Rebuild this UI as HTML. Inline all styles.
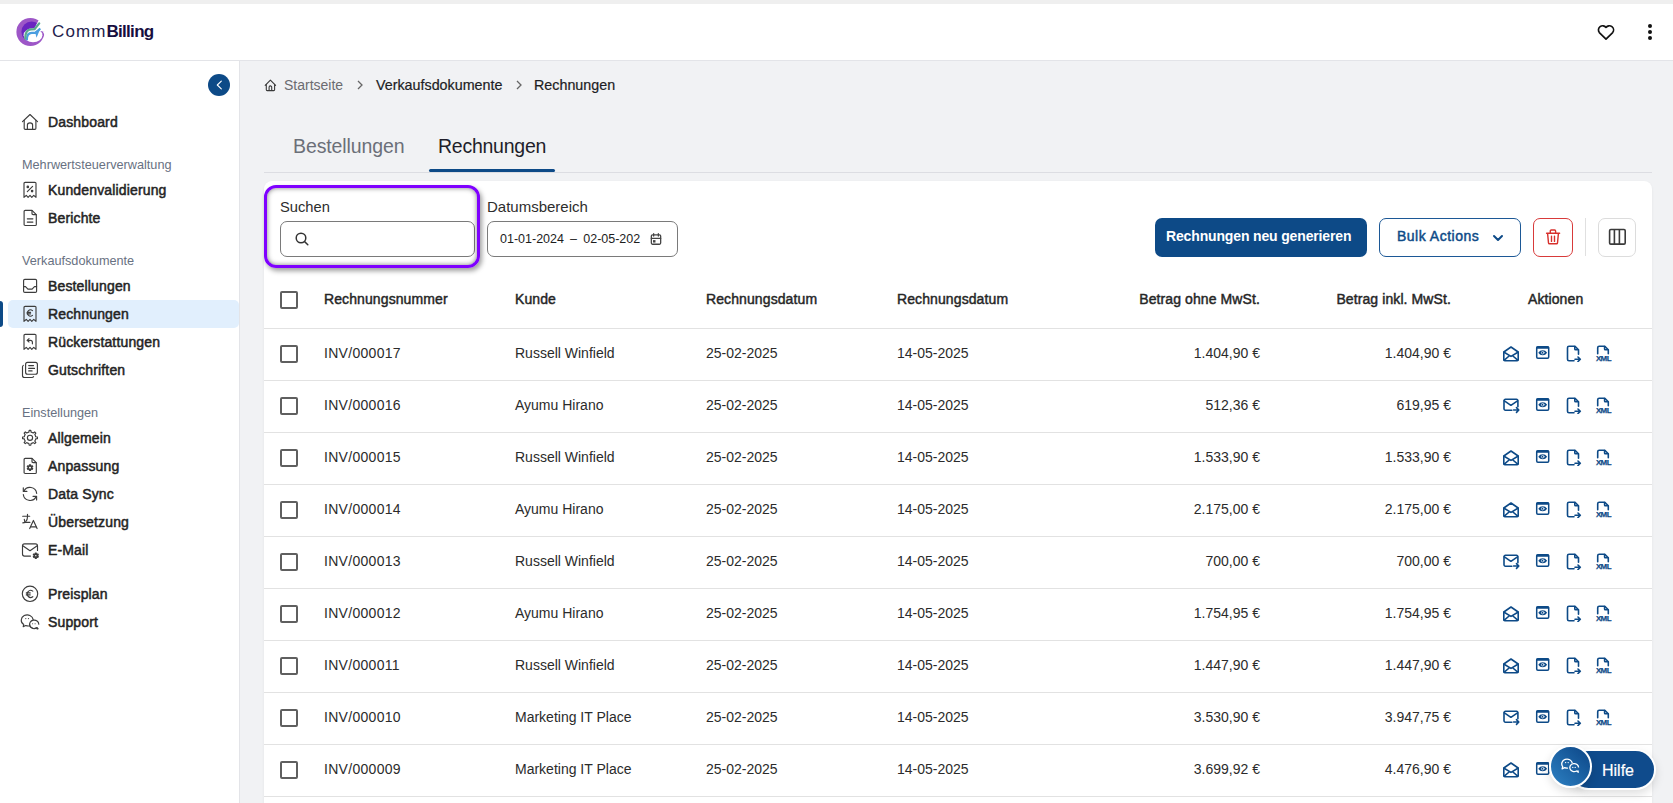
<!DOCTYPE html>
<html><head><meta charset="utf-8">
<style>
*{box-sizing:border-box;margin:0;padding:0}
html,body{width:1673px;height:803px;overflow:hidden;background:#f1f2f4;font-family:"Liberation Sans",sans-serif;color:#222}
.abs{position:absolute}
#topstrip{left:0;top:0;width:1673px;height:4px;background:#efefef}
#header{left:0;top:4px;width:1673px;height:57px;background:#fff;border-bottom:1px solid #e3e4e8}
#sidebar{left:0;top:61px;width:240px;height:742px;background:#fff;border-right:1px solid #e3e4e8}
.nav{position:absolute;left:8px;width:231px;height:28px;border-radius:5px}
.nav svg{position:absolute;left:10px;top:2px}
.nav span{position:absolute;left:40px;top:0;line-height:28px;font-size:14px;color:#242424;-webkit-text-stroke:0.5px #242424;letter-spacing:0.15px;white-space:nowrap}
.nav.active{background:#e1effd}
.sec{position:absolute;left:22px;font-size:12.7px;color:#687182;line-height:16px;white-space:nowrap}
.ico{fill:none;stroke:#3d3d3d;stroke-width:1.15;stroke-linecap:round;stroke-linejoin:round}
#card{left:264px;top:181px;width:1388px;height:640px;background:#fff;border-radius:8px;box-shadow:0 1px 3px rgba(0,0,0,.06)}
.row{position:absolute;left:264px;width:1388px;height:52px;border-top:1px solid #e2e2e2}
.cb{position:absolute;left:280px;width:18px;height:18px;border:2px solid #5f5f5f;border-radius:2px}
.td{position:absolute;font-size:14px;line-height:20px;color:#2b2b2b;white-space:nowrap}
.td.r{text-align:right}
.th{position:absolute;font-size:14px;line-height:20px;color:#262626;-webkit-text-stroke:0.45px #262626;white-space:nowrap;letter-spacing:0.1px}
.aic{position:absolute;fill:none;stroke:#0d4a87;stroke-width:1.6;stroke-linecap:round;stroke-linejoin:round}
</style></head>
<body>
<div id="topstrip" class="abs"></div>
<div id="header" class="abs">
  <svg class="abs" style="left:14px;top:12px" width="34" height="32" viewBox="0 0 34 32">
    <circle cx="16.4" cy="16" r="14" fill="#9d56c7"/>
    <circle cx="17.6" cy="15.8" r="10.2" fill="#6a24c0"/>
    <ellipse cx="19" cy="19.3" rx="9.4" ry="7" fill="#fff"/>
    <path d="M19 15L24.6 4.2 34 0V15.5L30.5 15.5z" fill="#fff"/>
    <path d="M28.6 15.2 L31 15.2 L31 20 Z" fill="#fff"/>
    <path d="M22.5 21.8L26.5 12.2 21 15.5z" fill="#4d9fe0"/>
    <path d="M12.8 24.2C12.8 19 15 16.9 17.8 16.9L21.6 16.9 26.2 12.6" fill="none" stroke="#4a9ee0" stroke-width="2.2"/>
    <path d="M11.2 22.6C11.2 16.5 13.8 13.4 17 13.3L20.6 13.2 25.2 7.4" fill="none" stroke="#5da98e" stroke-width="2.3" stroke-linecap="round"/>
  </svg>
  <div class="abs" style="left:52px;top:13px;font-size:17px;line-height:30px;color:#231c4c;white-space:nowrap;letter-spacing:1.1px">Comm<b style="color:#170f3f;letter-spacing:-0.7px">Billing</b></div>
  <svg class="abs" style="left:1596px;top:18px" width="20" height="20" viewBox="0 0 24 24" fill="none" stroke="#111" stroke-width="2" stroke-linejoin="round"><path d="M12 20.5l-8-7.8A4.6 4.6 0 0 1 12 6.5a4.6 4.6 0 0 1 8 6.2z"/></svg>
  <div class="abs" style="left:1648px;top:20px;width:4px;height:4px;border-radius:2px;background:#111"></div>
  <div class="abs" style="left:1648px;top:26px;width:4px;height:4px;border-radius:2px;background:#111"></div>
  <div class="abs" style="left:1648px;top:32px;width:4px;height:4px;border-radius:2px;background:#111"></div>
</div>
<div id="sidebar" class="abs">
</div>
<div class="nav" style="top:108px"><svg viewBox="0 0 24 24" width="24" height="24" class="ico" ><path d="M4.5 11.7L12 4.5l7.5 7.2"/><path d="M6.2 10.2v8.1a1.1 1.1 0 0 0 1.1 1.1h9.5a1.1 1.1 0 0 0 1.1-1.1v-8.1"/><path d="M9.4 19.4v-4.3a2.6 2.2 0 0 1 5.2 0v4.3"/></svg><span>Dashboard</span></div><div class="sec" style="top:157px">Mehrwertsteuerverwaltung</div><div class="nav" style="top:176px"><svg viewBox="0 0 24 24" width="24" height="24" class="ico" ><path d="M6 19.3V5.4a1.1 1.1 0 0 1 1.1-1.1h9.8A1.1 1.1 0 0 1 18 5.4v13.9L15.7 17.4 13.8 19.3 12 17.4 10.1 19.3 8.3 17.4z"/><path d="M9.3 13.7l5.3-5.4"/><circle cx="9.8" cy="8.9" r=".75" fill="#3d3d3d"/><circle cx="14.1" cy="13.1" r=".75" fill="#3d3d3d"/></svg><span>Kundenvalidierung</span></div><div class="nav" style="top:204px"><svg viewBox="0 0 24 24" width="24" height="24" class="ico" ><path d="M7.2 4.3H14l4.3 4.3v9.8a1.1 1.1 0 0 1-1.1 1.1H7.2a1.1 1.1 0 0 1-1.1-1.1V5.4a1.1 1.1 0 0 1 1.1-1.1z"/><path d="M14 4.5v3a1.1 1.1 0 0 0 1.1 1.1h3"/><path d="M9.3 12.8h5.6M9.3 16.1h5.6"/></svg><span>Berichte</span></div><div class="sec" style="top:253px">Verkaufsdokumente</div><div class="nav" style="top:272px"><svg viewBox="0 0 24 24" width="24" height="24" class="ico" ><rect x="5.6" y="5.4" width="13" height="13" rx="1.2"/><path d="M5.6 12.6h1.9l2.4 2.5h4.2l2.4-2.5h2.1"/></svg><span>Bestellungen</span></div><div class="nav active" style="top:300px"><svg viewBox="0 0 24 24" width="24" height="24" class="ico" ><path d="M6 19.3V5.4a1.1 1.1 0 0 1 1.1-1.1h9.8A1.1 1.1 0 0 1 18 5.4v13.9L15.7 17.4 13.8 19.3 12 17.4 10.1 19.3 8.3 17.4z"/><path d="M14.5 8.6a3.1 3.1 0 1 0 0 4.8"/><path d="M9.2 10.3h3.4M9.2 11.8h3.4"/></svg><span>Rechnungen</span></div><div class="nav" style="top:328px"><svg viewBox="0 0 24 24" width="24" height="24" class="ico" ><path d="M6 19.3V5.4a1.1 1.1 0 0 1 1.1-1.1h9.8A1.1 1.1 0 0 1 18 5.4v13.9L15.7 17.4 13.8 19.3 12 17.4 10.1 19.3 8.3 17.4z"/><path d="M14.4 13.8v-1.5a2 2 0 0 0-2-2H9.3"/><path d="M11 8.6l-1.8 1.7 1.8 1.7"/></svg><span>Rückerstattungen</span></div><div class="nav" style="top:356px"><svg viewBox="0 0 24 24" width="24" height="24" class="ico" ><rect x="7.6" y="4.4" width="11.8" height="11.8" rx="2"/><path d="M5.3 7.4a2 2 0 0 0-.8 1.6v8.5a2 2 0 0 0 2 2h7.5a2 2 0 0 0 1.6-.8"/><path d="M10.7 7.6h4.8M10.7 10.4h5.8M10.7 12.9h3.4"/></svg><span>Gutschriften</span></div><div class="sec" style="top:405px">Einstellungen</div><div class="nav" style="top:424px"><svg viewBox="0 0 24 24" width="24" height="24" class="ico" ><path d="M9.78 6.44 L10.91 6.10 L11.18 4.35 L12.82 4.35 L13.09 6.10 L14.22 6.44 L15.26 7.00 L16.69 5.95 L17.85 7.11 L16.80 8.54 L17.36 9.58 L17.70 10.71 L19.45 10.98 L19.45 12.62 L17.70 12.89 L17.36 14.02 L16.80 15.06 L17.85 16.49 L16.69 17.65 L15.26 16.60 L14.22 17.16 L13.09 17.50 L12.82 19.25 L11.18 19.25 L10.91 17.50 L9.78 17.16 L8.74 16.60 L7.31 17.65 L6.15 16.49 L7.20 15.06 L6.64 14.02 L6.30 12.89 L4.55 12.62 L4.55 10.98 L6.30 10.71 L6.64 9.58 L7.20 8.54 L6.15 7.11 L7.31 5.95 L8.74 7.00Z"/><circle cx="12" cy="11.8" r="2.6"/></svg><span>Allgemein</span></div><div class="nav" style="top:452px"><svg viewBox="0 0 24 24" width="24" height="24" class="ico" ><path d="M7.2 4.3H14l4.3 4.3v9.8a1.1 1.1 0 0 1-1.1 1.1H7.2a1.1 1.1 0 0 1-1.1-1.1V5.4a1.1 1.1 0 0 1 1.1-1.1z"/><path d="M14 4.5v3a1.1 1.1 0 0 0 1.1 1.1h3"/><path d="M11.20 12.21 L11.53 12.07 L11.46 10.85 L12.54 10.85 L12.47 12.07 L12.80 12.21 L13.09 12.43 L14.11 11.76 L14.65 12.69 L13.56 13.24 L13.60 13.60 L13.56 13.96 L14.65 14.51 L14.11 15.44 L13.09 14.77 L12.80 14.99 L12.47 15.13 L12.54 16.35 L11.46 16.35 L11.53 15.13 L11.20 14.99 L10.91 14.77 L9.89 15.44 L9.35 14.51 L10.44 13.96 L10.40 13.60 L10.44 13.24 L9.35 12.69 L9.89 11.76 L10.91 12.43Z" style="stroke-width:1.3"/></svg><span>Anpassung</span></div><div class="nav" style="top:480px"><svg viewBox="0 0 24 24" width="24" height="24" class="ico" ><path d="M18.7 11.3A6.8 6.8 0 0 0 5.9 9.2"/><path d="M5.3 5.8v3.6h3.6"/><path d="M5.3 12.5A6.8 6.8 0 0 0 18 14.9"/><path d="M15 14.3h3.6v3.6"/></svg><span>Data Sync</span></div><div class="nav" style="top:508px"><svg viewBox="0 0 24 24" width="24" height="24" class="ico" ><path d="M4.7 6.2h7"/><path d="M9.5 4.2v2.5c0 2.4-.7 3.9-1.8 4.9"/><path d="M6.3 9.3l.5 2.6"/><path d="M4.8 12.9l2.6-.5h4.5"/><path d="M11.7 18.6l3.7-8.2 3.7 8.2"/><path d="M12.9 16.9h5"/></svg><span>Übersetzung</span></div><div class="nav" style="top:536px"><svg viewBox="0 0 24 24" width="24" height="24" class="ico" ><path d="M12.5 18.1H6.5a2 2 0 0 1-2-2V7.8a2 2 0 0 1 2-2h11a2 2 0 0 1 2 2v4.6"/><path d="M4.8 7.7l7.2 5 7.2-5"/><path d="M17.15 16.57 L17.42 16.46 L17.30 15.15 L18.30 15.15 L18.18 16.46 L18.45 16.57 L18.68 16.75 L19.76 15.99 L20.26 16.86 L19.07 17.41 L19.10 17.70 L19.07 17.99 L20.26 18.54 L19.76 19.41 L18.68 18.65 L18.45 18.83 L18.18 18.94 L18.30 20.25 L17.30 20.25 L17.42 18.94 L17.15 18.83 L16.92 18.65 L15.84 19.41 L15.34 18.54 L16.53 17.99 L16.50 17.70 L16.53 17.41 L15.34 16.86 L15.84 15.99 L16.92 16.75Z" style="stroke-width:1.3"/></svg><span>E-Mail</span></div><div class="nav" style="top:580px"><svg viewBox="0 0 24 24" width="24" height="24" class="ico" ><circle cx="12" cy="11.8" r="7.7"/><path d="M14.8 9.1A3.5 3.5 0 1 0 14.8 14.7"/><path d="M8.3 10.9h3.9M8.3 12.9h3.9"/></svg><span>Preisplan</span></div><div class="nav" style="top:608px"><svg viewBox="0 0 24 24" width="24" height="24" class="ico" ><path d="M15.2 9.6A6 5.4 0 1 0 5.7 14.6l-.5 2 2.5-1.1a6.3 5.5 0 0 0 3.5.5"/><path d="M20.8 14.2a4.6 4.2 0 1 0-2.1 3.6l.5 1.3-.1-1.5"/><path d="M11.5 14.2a4.6 4.2 0 0 0 7.2 3.6l1.4.9"/><circle cx="7.8" cy="8.6" r=".6" fill="#3d3d3d" stroke="none"/><circle cx="10.5" cy="8.6" r=".6" fill="#3d3d3d" stroke="none"/><circle cx="14.6" cy="13.7" r=".55" fill="#3d3d3d" stroke="none"/><circle cx="17.1" cy="13.7" r=".55" fill="#3d3d3d" stroke="none"/></svg><span>Support</span></div><div class="abs" style="left:0;top:301px;width:3px;height:26px;background:#0d4a87;border-radius:0 3px 3px 0"></div>
<div class="abs" style="left:208px;top:74px;width:22px;height:22px;border-radius:11px;background:#0d4a87"></div>
<svg class="abs" style="left:208px;top:74px" width="22" height="22" viewBox="0 0 22 22" fill="none" stroke="#fff" stroke-width="1.15" stroke-linecap="round" stroke-linejoin="round"><path d="M13.3 7.2L9.3 11l4 3.8"/></svg>

<!-- breadcrumb -->
<svg class="abs" style="left:260px;top:75px" width="20" height="20" viewBox="0 0 20 20" fill="none" stroke="#3a3a3a" stroke-width="1.1" stroke-linecap="round" stroke-linejoin="round"><path d="M5.2 10.3L10.4 5.1l5.2 5.2"/><path d="M6.3 9.3v5.5a.8.8 0 0 0 .8.8h6.7a.8.8 0 0 0 .8-.8V9.3"/><path d="M9.1 15.5v-3.3a1.3 1.3 0 0 1 2.6 0v3.3"/></svg>
<div class="abs" style="left:284px;top:76px;font-size:14px;line-height:18px;color:#6b6b70;white-space:nowrap">Startseite</div>
<svg class="abs" style="left:354px;top:79px" width="12" height="12" viewBox="0 0 12 12" fill="none" stroke="#666" stroke-width="1.3"><path d="M4 2l4 4-4 4"/></svg>
<div class="abs" style="left:376px;top:76px;font-size:14.3px;line-height:18px;color:#1d1d24;white-space:nowrap;-webkit-text-stroke:0.2px #1d1d24">Verkaufsdokumente</div>
<svg class="abs" style="left:513px;top:79px" width="12" height="12" viewBox="0 0 12 12" fill="none" stroke="#666" stroke-width="1.3"><path d="M4 2l4 4-4 4"/></svg>
<div class="abs" style="left:534px;top:76px;font-size:14.3px;line-height:18px;color:#1d1d24;white-space:nowrap;-webkit-text-stroke:0.2px #1d1d24">Rechnungen</div>

<!-- tabs -->
<div class="abs" style="left:293px;top:134px;font-size:19.5px;line-height:24px;color:#6b6f78;white-space:nowrap;letter-spacing:-0.1px">Bestellungen</div>
<div class="abs" style="left:438px;top:134px;font-size:19.5px;line-height:24px;color:#1e1e2a;white-space:nowrap;letter-spacing:-0.25px">Rechnungen</div>
<div class="abs" style="left:264px;top:172px;width:1388px;height:1px;background:#dcdde2"></div>
<div class="abs" style="left:429px;top:169px;width:126px;height:3px;background:#0d4a87;border-radius:2px"></div>

<div id="card" class="abs"></div>

<!-- filters -->
<div class="abs" style="left:280px;top:198px;font-size:14.7px;line-height:18px;color:#2d2d2d;white-space:nowrap">Suchen</div>
<div class="abs" style="left:280px;top:221px;width:195px;height:36px;border:1px solid #7a7a7a;border-radius:7px;background:#fff"></div>
<svg class="abs" style="left:294px;top:231px" width="16" height="16" viewBox="0 0 16 16" fill="none" stroke="#333" stroke-width="1.5" stroke-linecap="round"><circle cx="7" cy="7" r="4.8"/><path d="M10.5 10.5l3.3 3.3"/></svg>
<div class="abs" style="left:264px;top:185px;width:216px;height:83px;border:3px solid #7f00ff;border-radius:12px;box-shadow:inset 0 0 5px rgba(0,0,0,.5), 2px 3px 5px rgba(0,0,0,.38)"></div>

<div class="abs" style="left:487px;top:198px;font-size:15px;line-height:18px;color:#2d2d2d;white-space:nowrap">Datumsbereich</div>
<div class="abs" style="left:487px;top:221px;width:191px;height:36px;border:1px solid #7a7a7a;border-radius:7px;background:#fff"></div>
<div class="abs" style="left:500px;top:230px;font-size:12.5px;line-height:18px;color:#1d1d1d;white-space:nowrap;word-spacing:2.7px">01-01-2024 – 02-05-202</div>
<svg class="abs" style="left:649px;top:232px" width="14" height="14" viewBox="0 0 24 24" fill="none" stroke="#444" stroke-width="2.2" stroke-linecap="round"><rect x="4" y="5" width="16" height="16" rx="2"/><path d="M16 3v4M8 3v4M4 11h16"/><rect x="8" y="15" width="2" height="2" fill="#555"/></svg>

<div class="abs" style="left:1155px;top:218px;width:212px;height:39px;background:#0d4a87;border-radius:7px"></div>
<div class="abs" style="left:1166px;top:226px;font-size:14px;line-height:20px;color:#fff;font-weight:bold;white-space:nowrap;letter-spacing:-0.15px">Rechnungen neu generieren</div>
<div class="abs" style="left:1379px;top:218px;width:142px;height:39px;border:1.5px solid #1c5896;border-radius:7px"></div>
<div class="abs" style="left:1397px;top:226px;font-size:14px;line-height:20px;color:#0d4a87;-webkit-text-stroke:0.45px #0d4a87;white-space:nowrap;letter-spacing:0.5px">Bulk Actions</div>
<svg class="abs" style="left:1491px;top:231px" width="14" height="14" viewBox="0 0 14 14" fill="none" stroke="#0d4a87" stroke-width="2" stroke-linecap="round" stroke-linejoin="round"><path d="M3 5l4 4 4-4"/></svg>
<div class="abs" style="left:1533px;top:218px;width:40px;height:39px;border:1.5px solid #d83a3a;border-radius:7px"></div>
<svg class="abs" style="left:1535px;top:220px" width="40" height="36" viewBox="0 0 40 36" fill="none" stroke="#d7302c" stroke-width="1.4" stroke-linecap="round" stroke-linejoin="round"><path d="M11.6 13.2H24.6"/><path d="M15.3 13.2V11a1 1 0 0 1 1-1h3.3a1 1 0 0 1 1 1v2.2"/><path d="M12.6 13.6l.9 9.3a1 1 0 0 0 1 .9h7a1 1 0 0 0 1-.9l.9-9.3"/><path d="M16.5 16.2v5.2M19.5 16.2v5.2"/></svg>
<div class="abs" style="left:1585px;top:218px;width:1px;height:38px;background:#e0e0e0"></div>
<div class="abs" style="left:1598px;top:218px;width:38px;height:39px;border:1px solid #dcdcdc;border-radius:7px"></div>
<svg class="abs" style="left:1598px;top:220px" width="38" height="36" viewBox="0 0 38 36" fill="none" stroke="#3a3a3a" stroke-width="1.6"><rect x="11.6" y="9.5" width="15.6" height="14.6" rx="1.2"/><path d="M16.4 9.5v14.6M21.4 9.5v14.6"/></svg>

<!-- table header -->
<div class="cb" style="top:291px"></div>
<div class="th" style="left:324px;top:289px">Rechnungsnummer</div>
<div class="th" style="left:515px;top:289px">Kunde</div>
<div class="th" style="left:706px;top:289px">Rechnungsdatum</div>
<div class="th" style="left:897px;top:289px">Rechnungsdatum</div>
<div class="th" style="right:413px;top:289px">Betrag ohne MwSt.</div>
<div class="th" style="right:222px;top:289px">Betrag inkl. MwSt.</div>
<div class="th" style="left:1528px;top:289px">Aktionen</div>

<div class="row" style="top:328px"></div><div class="cb" style="top:345px"></div><div class="td" style="left:324px;top:343px;letter-spacing:0.3px">INV/000017</div><div class="td" style="left:515px;top:343px">Russell Winfield</div><div class="td" style="left:706px;top:343px">25-02-2025</div><div class="td" style="left:897px;top:343px">14-05-2025</div><div class="td r" style="right:413px;top:343px">1.404,90 €</div><div class="td r" style="right:222px;top:343px">1.404,90 €</div><svg class="aic" viewBox="0 0 18 18" width="18" height="18" style="left:1502px;top:344px"><path d="M1.8 8L9 3l7.2 5v7.7a1 1 0 0 1-1 1H2.8a1 1 0 0 1-1-1z"/><path d="M2.1 8.2L9 12.4l6.9-4.2"/><path d="M2.3 16.2l4.8-4.2M15.7 16.2l-4.8-4.2"/></svg><svg class="aic" viewBox="0 0 18 18" width="18" height="18" style="left:1533px;top:344px"><rect x="3.7" y="2.8" width="12" height="11.4" rx="1.2" style="stroke-width:1.5"/><rect x="3.2" y="2.4" width="13" height="2.4" rx="1" fill="#0d4a87" stroke="none"/><path d="M5.3 8.7c1.1-1.7 2.5-2.5 4.4-2.5s3.3.8 4.4 2.5c-1.1 1.7-2.5 2.5-4.4 2.5S6.4 10.4 5.3 8.7z" fill="#0d4a87" stroke="none"/><circle cx="9.7" cy="8.7" r="1.3" fill="none" stroke="#fff" style="stroke-width:.7"/></svg><svg class="aic" viewBox="0 0 18 18" width="18" height="18" style="left:1564px;top:344px"><g transform="translate(0 .8)"><path d="M10 16H5a1.5 1.5 0 0 1-1.5-1.5V3A1.5 1.5 0 0 1 5 1.5h6l3.5 3.5v4.5"/><path d="M10.8 1.8v2.4a.8.8 0 0 0 .8.8h2.5"/><path d="M11 14.5h5M14 12.2l2.3 2.3-2.3 2.3"/></g></svg><svg class="aic" viewBox="0 0 18 18" width="18" height="18" style="left:1594px;top:344px"><g transform="translate(0 .8)"><path d="M3.7 9V3A1.5 1.5 0 0 1 5.2 1.5h5.6l3.5 3.5v4"/><path d="M10.6 1.8v2.4a.8.8 0 0 0 .8.8h2.5"/></g><text x="9.4" y="17.3" text-anchor="middle" font-size="7.9" font-weight="bold" font-family="Liberation Sans" fill="#0d4a87" stroke="#0d4a87" stroke-width=".25" letter-spacing="-0.55">XML</text></svg><div class="row" style="top:380px"></div><div class="cb" style="top:397px"></div><div class="td" style="left:324px;top:395px;letter-spacing:0.3px">INV/000016</div><div class="td" style="left:515px;top:395px">Ayumu Hirano</div><div class="td" style="left:706px;top:395px">25-02-2025</div><div class="td" style="left:897px;top:395px">14-05-2025</div><div class="td r" style="right:413px;top:395px">512,36 €</div><div class="td r" style="right:222px;top:395px">619,95 €</div><svg class="aic" viewBox="0 0 18 18" width="18" height="18" style="left:1502px;top:396px"><path d="M9.8 14.2H3.4a1.4 1.4 0 0 1-1.4-1.4V4.7a1.4 1.4 0 0 1 1.4-1.4h11.1a1.4 1.4 0 0 1 1.4 1.4v6"/><path d="M2.4 4.8L8.9 9.3l6.6-4.5"/><path d="M11.6 14h4.8M14.5 11.6l2.3 2.4-2.3 2.4"/></svg><svg class="aic" viewBox="0 0 18 18" width="18" height="18" style="left:1533px;top:396px"><rect x="3.7" y="2.8" width="12" height="11.4" rx="1.2" style="stroke-width:1.5"/><rect x="3.2" y="2.4" width="13" height="2.4" rx="1" fill="#0d4a87" stroke="none"/><path d="M5.3 8.7c1.1-1.7 2.5-2.5 4.4-2.5s3.3.8 4.4 2.5c-1.1 1.7-2.5 2.5-4.4 2.5S6.4 10.4 5.3 8.7z" fill="#0d4a87" stroke="none"/><circle cx="9.7" cy="8.7" r="1.3" fill="none" stroke="#fff" style="stroke-width:.7"/></svg><svg class="aic" viewBox="0 0 18 18" width="18" height="18" style="left:1564px;top:396px"><g transform="translate(0 .8)"><path d="M10 16H5a1.5 1.5 0 0 1-1.5-1.5V3A1.5 1.5 0 0 1 5 1.5h6l3.5 3.5v4.5"/><path d="M10.8 1.8v2.4a.8.8 0 0 0 .8.8h2.5"/><path d="M11 14.5h5M14 12.2l2.3 2.3-2.3 2.3"/></g></svg><svg class="aic" viewBox="0 0 18 18" width="18" height="18" style="left:1594px;top:396px"><g transform="translate(0 .8)"><path d="M3.7 9V3A1.5 1.5 0 0 1 5.2 1.5h5.6l3.5 3.5v4"/><path d="M10.6 1.8v2.4a.8.8 0 0 0 .8.8h2.5"/></g><text x="9.4" y="17.3" text-anchor="middle" font-size="7.9" font-weight="bold" font-family="Liberation Sans" fill="#0d4a87" stroke="#0d4a87" stroke-width=".25" letter-spacing="-0.55">XML</text></svg><div class="row" style="top:432px"></div><div class="cb" style="top:449px"></div><div class="td" style="left:324px;top:447px;letter-spacing:0.3px">INV/000015</div><div class="td" style="left:515px;top:447px">Russell Winfield</div><div class="td" style="left:706px;top:447px">25-02-2025</div><div class="td" style="left:897px;top:447px">14-05-2025</div><div class="td r" style="right:413px;top:447px">1.533,90 €</div><div class="td r" style="right:222px;top:447px">1.533,90 €</div><svg class="aic" viewBox="0 0 18 18" width="18" height="18" style="left:1502px;top:448px"><path d="M1.8 8L9 3l7.2 5v7.7a1 1 0 0 1-1 1H2.8a1 1 0 0 1-1-1z"/><path d="M2.1 8.2L9 12.4l6.9-4.2"/><path d="M2.3 16.2l4.8-4.2M15.7 16.2l-4.8-4.2"/></svg><svg class="aic" viewBox="0 0 18 18" width="18" height="18" style="left:1533px;top:448px"><rect x="3.7" y="2.8" width="12" height="11.4" rx="1.2" style="stroke-width:1.5"/><rect x="3.2" y="2.4" width="13" height="2.4" rx="1" fill="#0d4a87" stroke="none"/><path d="M5.3 8.7c1.1-1.7 2.5-2.5 4.4-2.5s3.3.8 4.4 2.5c-1.1 1.7-2.5 2.5-4.4 2.5S6.4 10.4 5.3 8.7z" fill="#0d4a87" stroke="none"/><circle cx="9.7" cy="8.7" r="1.3" fill="none" stroke="#fff" style="stroke-width:.7"/></svg><svg class="aic" viewBox="0 0 18 18" width="18" height="18" style="left:1564px;top:448px"><g transform="translate(0 .8)"><path d="M10 16H5a1.5 1.5 0 0 1-1.5-1.5V3A1.5 1.5 0 0 1 5 1.5h6l3.5 3.5v4.5"/><path d="M10.8 1.8v2.4a.8.8 0 0 0 .8.8h2.5"/><path d="M11 14.5h5M14 12.2l2.3 2.3-2.3 2.3"/></g></svg><svg class="aic" viewBox="0 0 18 18" width="18" height="18" style="left:1594px;top:448px"><g transform="translate(0 .8)"><path d="M3.7 9V3A1.5 1.5 0 0 1 5.2 1.5h5.6l3.5 3.5v4"/><path d="M10.6 1.8v2.4a.8.8 0 0 0 .8.8h2.5"/></g><text x="9.4" y="17.3" text-anchor="middle" font-size="7.9" font-weight="bold" font-family="Liberation Sans" fill="#0d4a87" stroke="#0d4a87" stroke-width=".25" letter-spacing="-0.55">XML</text></svg><div class="row" style="top:484px"></div><div class="cb" style="top:501px"></div><div class="td" style="left:324px;top:499px;letter-spacing:0.3px">INV/000014</div><div class="td" style="left:515px;top:499px">Ayumu Hirano</div><div class="td" style="left:706px;top:499px">25-02-2025</div><div class="td" style="left:897px;top:499px">14-05-2025</div><div class="td r" style="right:413px;top:499px">2.175,00 €</div><div class="td r" style="right:222px;top:499px">2.175,00 €</div><svg class="aic" viewBox="0 0 18 18" width="18" height="18" style="left:1502px;top:500px"><path d="M1.8 8L9 3l7.2 5v7.7a1 1 0 0 1-1 1H2.8a1 1 0 0 1-1-1z"/><path d="M2.1 8.2L9 12.4l6.9-4.2"/><path d="M2.3 16.2l4.8-4.2M15.7 16.2l-4.8-4.2"/></svg><svg class="aic" viewBox="0 0 18 18" width="18" height="18" style="left:1533px;top:500px"><rect x="3.7" y="2.8" width="12" height="11.4" rx="1.2" style="stroke-width:1.5"/><rect x="3.2" y="2.4" width="13" height="2.4" rx="1" fill="#0d4a87" stroke="none"/><path d="M5.3 8.7c1.1-1.7 2.5-2.5 4.4-2.5s3.3.8 4.4 2.5c-1.1 1.7-2.5 2.5-4.4 2.5S6.4 10.4 5.3 8.7z" fill="#0d4a87" stroke="none"/><circle cx="9.7" cy="8.7" r="1.3" fill="none" stroke="#fff" style="stroke-width:.7"/></svg><svg class="aic" viewBox="0 0 18 18" width="18" height="18" style="left:1564px;top:500px"><g transform="translate(0 .8)"><path d="M10 16H5a1.5 1.5 0 0 1-1.5-1.5V3A1.5 1.5 0 0 1 5 1.5h6l3.5 3.5v4.5"/><path d="M10.8 1.8v2.4a.8.8 0 0 0 .8.8h2.5"/><path d="M11 14.5h5M14 12.2l2.3 2.3-2.3 2.3"/></g></svg><svg class="aic" viewBox="0 0 18 18" width="18" height="18" style="left:1594px;top:500px"><g transform="translate(0 .8)"><path d="M3.7 9V3A1.5 1.5 0 0 1 5.2 1.5h5.6l3.5 3.5v4"/><path d="M10.6 1.8v2.4a.8.8 0 0 0 .8.8h2.5"/></g><text x="9.4" y="17.3" text-anchor="middle" font-size="7.9" font-weight="bold" font-family="Liberation Sans" fill="#0d4a87" stroke="#0d4a87" stroke-width=".25" letter-spacing="-0.55">XML</text></svg><div class="row" style="top:536px"></div><div class="cb" style="top:553px"></div><div class="td" style="left:324px;top:551px;letter-spacing:0.3px">INV/000013</div><div class="td" style="left:515px;top:551px">Russell Winfield</div><div class="td" style="left:706px;top:551px">25-02-2025</div><div class="td" style="left:897px;top:551px">14-05-2025</div><div class="td r" style="right:413px;top:551px">700,00 €</div><div class="td r" style="right:222px;top:551px">700,00 €</div><svg class="aic" viewBox="0 0 18 18" width="18" height="18" style="left:1502px;top:552px"><path d="M9.8 14.2H3.4a1.4 1.4 0 0 1-1.4-1.4V4.7a1.4 1.4 0 0 1 1.4-1.4h11.1a1.4 1.4 0 0 1 1.4 1.4v6"/><path d="M2.4 4.8L8.9 9.3l6.6-4.5"/><path d="M11.6 14h4.8M14.5 11.6l2.3 2.4-2.3 2.4"/></svg><svg class="aic" viewBox="0 0 18 18" width="18" height="18" style="left:1533px;top:552px"><rect x="3.7" y="2.8" width="12" height="11.4" rx="1.2" style="stroke-width:1.5"/><rect x="3.2" y="2.4" width="13" height="2.4" rx="1" fill="#0d4a87" stroke="none"/><path d="M5.3 8.7c1.1-1.7 2.5-2.5 4.4-2.5s3.3.8 4.4 2.5c-1.1 1.7-2.5 2.5-4.4 2.5S6.4 10.4 5.3 8.7z" fill="#0d4a87" stroke="none"/><circle cx="9.7" cy="8.7" r="1.3" fill="none" stroke="#fff" style="stroke-width:.7"/></svg><svg class="aic" viewBox="0 0 18 18" width="18" height="18" style="left:1564px;top:552px"><g transform="translate(0 .8)"><path d="M10 16H5a1.5 1.5 0 0 1-1.5-1.5V3A1.5 1.5 0 0 1 5 1.5h6l3.5 3.5v4.5"/><path d="M10.8 1.8v2.4a.8.8 0 0 0 .8.8h2.5"/><path d="M11 14.5h5M14 12.2l2.3 2.3-2.3 2.3"/></g></svg><svg class="aic" viewBox="0 0 18 18" width="18" height="18" style="left:1594px;top:552px"><g transform="translate(0 .8)"><path d="M3.7 9V3A1.5 1.5 0 0 1 5.2 1.5h5.6l3.5 3.5v4"/><path d="M10.6 1.8v2.4a.8.8 0 0 0 .8.8h2.5"/></g><text x="9.4" y="17.3" text-anchor="middle" font-size="7.9" font-weight="bold" font-family="Liberation Sans" fill="#0d4a87" stroke="#0d4a87" stroke-width=".25" letter-spacing="-0.55">XML</text></svg><div class="row" style="top:588px"></div><div class="cb" style="top:605px"></div><div class="td" style="left:324px;top:603px;letter-spacing:0.3px">INV/000012</div><div class="td" style="left:515px;top:603px">Ayumu Hirano</div><div class="td" style="left:706px;top:603px">25-02-2025</div><div class="td" style="left:897px;top:603px">14-05-2025</div><div class="td r" style="right:413px;top:603px">1.754,95 €</div><div class="td r" style="right:222px;top:603px">1.754,95 €</div><svg class="aic" viewBox="0 0 18 18" width="18" height="18" style="left:1502px;top:604px"><path d="M1.8 8L9 3l7.2 5v7.7a1 1 0 0 1-1 1H2.8a1 1 0 0 1-1-1z"/><path d="M2.1 8.2L9 12.4l6.9-4.2"/><path d="M2.3 16.2l4.8-4.2M15.7 16.2l-4.8-4.2"/></svg><svg class="aic" viewBox="0 0 18 18" width="18" height="18" style="left:1533px;top:604px"><rect x="3.7" y="2.8" width="12" height="11.4" rx="1.2" style="stroke-width:1.5"/><rect x="3.2" y="2.4" width="13" height="2.4" rx="1" fill="#0d4a87" stroke="none"/><path d="M5.3 8.7c1.1-1.7 2.5-2.5 4.4-2.5s3.3.8 4.4 2.5c-1.1 1.7-2.5 2.5-4.4 2.5S6.4 10.4 5.3 8.7z" fill="#0d4a87" stroke="none"/><circle cx="9.7" cy="8.7" r="1.3" fill="none" stroke="#fff" style="stroke-width:.7"/></svg><svg class="aic" viewBox="0 0 18 18" width="18" height="18" style="left:1564px;top:604px"><g transform="translate(0 .8)"><path d="M10 16H5a1.5 1.5 0 0 1-1.5-1.5V3A1.5 1.5 0 0 1 5 1.5h6l3.5 3.5v4.5"/><path d="M10.8 1.8v2.4a.8.8 0 0 0 .8.8h2.5"/><path d="M11 14.5h5M14 12.2l2.3 2.3-2.3 2.3"/></g></svg><svg class="aic" viewBox="0 0 18 18" width="18" height="18" style="left:1594px;top:604px"><g transform="translate(0 .8)"><path d="M3.7 9V3A1.5 1.5 0 0 1 5.2 1.5h5.6l3.5 3.5v4"/><path d="M10.6 1.8v2.4a.8.8 0 0 0 .8.8h2.5"/></g><text x="9.4" y="17.3" text-anchor="middle" font-size="7.9" font-weight="bold" font-family="Liberation Sans" fill="#0d4a87" stroke="#0d4a87" stroke-width=".25" letter-spacing="-0.55">XML</text></svg><div class="row" style="top:640px"></div><div class="cb" style="top:657px"></div><div class="td" style="left:324px;top:655px;letter-spacing:0.3px">INV/000011</div><div class="td" style="left:515px;top:655px">Russell Winfield</div><div class="td" style="left:706px;top:655px">25-02-2025</div><div class="td" style="left:897px;top:655px">14-05-2025</div><div class="td r" style="right:413px;top:655px">1.447,90 €</div><div class="td r" style="right:222px;top:655px">1.447,90 €</div><svg class="aic" viewBox="0 0 18 18" width="18" height="18" style="left:1502px;top:656px"><path d="M1.8 8L9 3l7.2 5v7.7a1 1 0 0 1-1 1H2.8a1 1 0 0 1-1-1z"/><path d="M2.1 8.2L9 12.4l6.9-4.2"/><path d="M2.3 16.2l4.8-4.2M15.7 16.2l-4.8-4.2"/></svg><svg class="aic" viewBox="0 0 18 18" width="18" height="18" style="left:1533px;top:656px"><rect x="3.7" y="2.8" width="12" height="11.4" rx="1.2" style="stroke-width:1.5"/><rect x="3.2" y="2.4" width="13" height="2.4" rx="1" fill="#0d4a87" stroke="none"/><path d="M5.3 8.7c1.1-1.7 2.5-2.5 4.4-2.5s3.3.8 4.4 2.5c-1.1 1.7-2.5 2.5-4.4 2.5S6.4 10.4 5.3 8.7z" fill="#0d4a87" stroke="none"/><circle cx="9.7" cy="8.7" r="1.3" fill="none" stroke="#fff" style="stroke-width:.7"/></svg><svg class="aic" viewBox="0 0 18 18" width="18" height="18" style="left:1564px;top:656px"><g transform="translate(0 .8)"><path d="M10 16H5a1.5 1.5 0 0 1-1.5-1.5V3A1.5 1.5 0 0 1 5 1.5h6l3.5 3.5v4.5"/><path d="M10.8 1.8v2.4a.8.8 0 0 0 .8.8h2.5"/><path d="M11 14.5h5M14 12.2l2.3 2.3-2.3 2.3"/></g></svg><svg class="aic" viewBox="0 0 18 18" width="18" height="18" style="left:1594px;top:656px"><g transform="translate(0 .8)"><path d="M3.7 9V3A1.5 1.5 0 0 1 5.2 1.5h5.6l3.5 3.5v4"/><path d="M10.6 1.8v2.4a.8.8 0 0 0 .8.8h2.5"/></g><text x="9.4" y="17.3" text-anchor="middle" font-size="7.9" font-weight="bold" font-family="Liberation Sans" fill="#0d4a87" stroke="#0d4a87" stroke-width=".25" letter-spacing="-0.55">XML</text></svg><div class="row" style="top:692px"></div><div class="cb" style="top:709px"></div><div class="td" style="left:324px;top:707px;letter-spacing:0.3px">INV/000010</div><div class="td" style="left:515px;top:707px">Marketing IT Place</div><div class="td" style="left:706px;top:707px">25-02-2025</div><div class="td" style="left:897px;top:707px">14-05-2025</div><div class="td r" style="right:413px;top:707px">3.530,90 €</div><div class="td r" style="right:222px;top:707px">3.947,75 €</div><svg class="aic" viewBox="0 0 18 18" width="18" height="18" style="left:1502px;top:708px"><path d="M9.8 14.2H3.4a1.4 1.4 0 0 1-1.4-1.4V4.7a1.4 1.4 0 0 1 1.4-1.4h11.1a1.4 1.4 0 0 1 1.4 1.4v6"/><path d="M2.4 4.8L8.9 9.3l6.6-4.5"/><path d="M11.6 14h4.8M14.5 11.6l2.3 2.4-2.3 2.4"/></svg><svg class="aic" viewBox="0 0 18 18" width="18" height="18" style="left:1533px;top:708px"><rect x="3.7" y="2.8" width="12" height="11.4" rx="1.2" style="stroke-width:1.5"/><rect x="3.2" y="2.4" width="13" height="2.4" rx="1" fill="#0d4a87" stroke="none"/><path d="M5.3 8.7c1.1-1.7 2.5-2.5 4.4-2.5s3.3.8 4.4 2.5c-1.1 1.7-2.5 2.5-4.4 2.5S6.4 10.4 5.3 8.7z" fill="#0d4a87" stroke="none"/><circle cx="9.7" cy="8.7" r="1.3" fill="none" stroke="#fff" style="stroke-width:.7"/></svg><svg class="aic" viewBox="0 0 18 18" width="18" height="18" style="left:1564px;top:708px"><g transform="translate(0 .8)"><path d="M10 16H5a1.5 1.5 0 0 1-1.5-1.5V3A1.5 1.5 0 0 1 5 1.5h6l3.5 3.5v4.5"/><path d="M10.8 1.8v2.4a.8.8 0 0 0 .8.8h2.5"/><path d="M11 14.5h5M14 12.2l2.3 2.3-2.3 2.3"/></g></svg><svg class="aic" viewBox="0 0 18 18" width="18" height="18" style="left:1594px;top:708px"><g transform="translate(0 .8)"><path d="M3.7 9V3A1.5 1.5 0 0 1 5.2 1.5h5.6l3.5 3.5v4"/><path d="M10.6 1.8v2.4a.8.8 0 0 0 .8.8h2.5"/></g><text x="9.4" y="17.3" text-anchor="middle" font-size="7.9" font-weight="bold" font-family="Liberation Sans" fill="#0d4a87" stroke="#0d4a87" stroke-width=".25" letter-spacing="-0.55">XML</text></svg><div class="row" style="top:744px"></div><div class="cb" style="top:761px"></div><div class="td" style="left:324px;top:759px;letter-spacing:0.3px">INV/000009</div><div class="td" style="left:515px;top:759px">Marketing IT Place</div><div class="td" style="left:706px;top:759px">25-02-2025</div><div class="td" style="left:897px;top:759px">14-05-2025</div><div class="td r" style="right:413px;top:759px">3.699,92 €</div><div class="td r" style="right:222px;top:759px">4.476,90 €</div><svg class="aic" viewBox="0 0 18 18" width="18" height="18" style="left:1502px;top:760px"><path d="M1.8 8L9 3l7.2 5v7.7a1 1 0 0 1-1 1H2.8a1 1 0 0 1-1-1z"/><path d="M2.1 8.2L9 12.4l6.9-4.2"/><path d="M2.3 16.2l4.8-4.2M15.7 16.2l-4.8-4.2"/></svg><svg class="aic" viewBox="0 0 18 18" width="18" height="18" style="left:1533px;top:760px"><rect x="3.7" y="2.8" width="12" height="11.4" rx="1.2" style="stroke-width:1.5"/><rect x="3.2" y="2.4" width="13" height="2.4" rx="1" fill="#0d4a87" stroke="none"/><path d="M5.3 8.7c1.1-1.7 2.5-2.5 4.4-2.5s3.3.8 4.4 2.5c-1.1 1.7-2.5 2.5-4.4 2.5S6.4 10.4 5.3 8.7z" fill="#0d4a87" stroke="none"/><circle cx="9.7" cy="8.7" r="1.3" fill="none" stroke="#fff" style="stroke-width:.7"/></svg><svg class="aic" viewBox="0 0 18 18" width="18" height="18" style="left:1564px;top:760px"><g transform="translate(0 .8)"><path d="M10 16H5a1.5 1.5 0 0 1-1.5-1.5V3A1.5 1.5 0 0 1 5 1.5h6l3.5 3.5v4.5"/><path d="M10.8 1.8v2.4a.8.8 0 0 0 .8.8h2.5"/><path d="M11 14.5h5M14 12.2l2.3 2.3-2.3 2.3"/></g></svg><svg class="aic" viewBox="0 0 18 18" width="18" height="18" style="left:1594px;top:760px"><g transform="translate(0 .8)"><path d="M3.7 9V3A1.5 1.5 0 0 1 5.2 1.5h5.6l3.5 3.5v4"/><path d="M10.6 1.8v2.4a.8.8 0 0 0 .8.8h2.5"/></g><text x="9.4" y="17.3" text-anchor="middle" font-size="7.9" font-weight="bold" font-family="Liberation Sans" fill="#0d4a87" stroke="#0d4a87" stroke-width=".25" letter-spacing="-0.55">XML</text></svg>
<div class="row" style="top:796px"></div>

<!-- help -->
<div class="abs" style="left:1568px;top:749px;width:88px;height:41px;border-radius:21px;background:#0f4b8c;border:2px solid #fff;box-shadow:0 4px 10px rgba(0,0,0,.13)"></div>
<div class="abs" style="left:1602px;top:761px;font-size:16px;line-height:20px;color:#fff;white-space:nowrap;-webkit-text-stroke:0.2px #fff">Hilfe</div>
<div class="abs" style="left:1549px;top:745px;width:43px;height:43px;border-radius:22px;background:linear-gradient(225deg,#0f4b8c 10%,#2a7bbd 90%);border:2px solid #fff;box-shadow:0 4px 10px rgba(0,0,0,.13)"></div>
<svg class="abs" style="left:1559px;top:755px" width="22" height="22" viewBox="0 0 22 22" fill="none" stroke="#fff" stroke-width="1.3" stroke-linejoin="round">
<path d="M13.3 8.2A5.3 4.8 0 1 0 3.7 11.6l-.6 2.2 2.6-1.1a5.5 4.8 0 0 0 3.3.4"/>
<path d="M19.6 12.6a4.4 4 0 1 0-2.1 3.4l1.8 1.2-.5-1.9"/>
<circle cx="6.6" cy="7.6" r=".7" fill="#fff" stroke="none"/><circle cx="9.2" cy="7.6" r=".7" fill="#fff" stroke="none"/>
<circle cx="13.8" cy="12.4" r=".65" fill="#fff" stroke="none"/><circle cx="16.2" cy="12.4" r=".65" fill="#fff" stroke="none"/>
</svg>
</body></html>
